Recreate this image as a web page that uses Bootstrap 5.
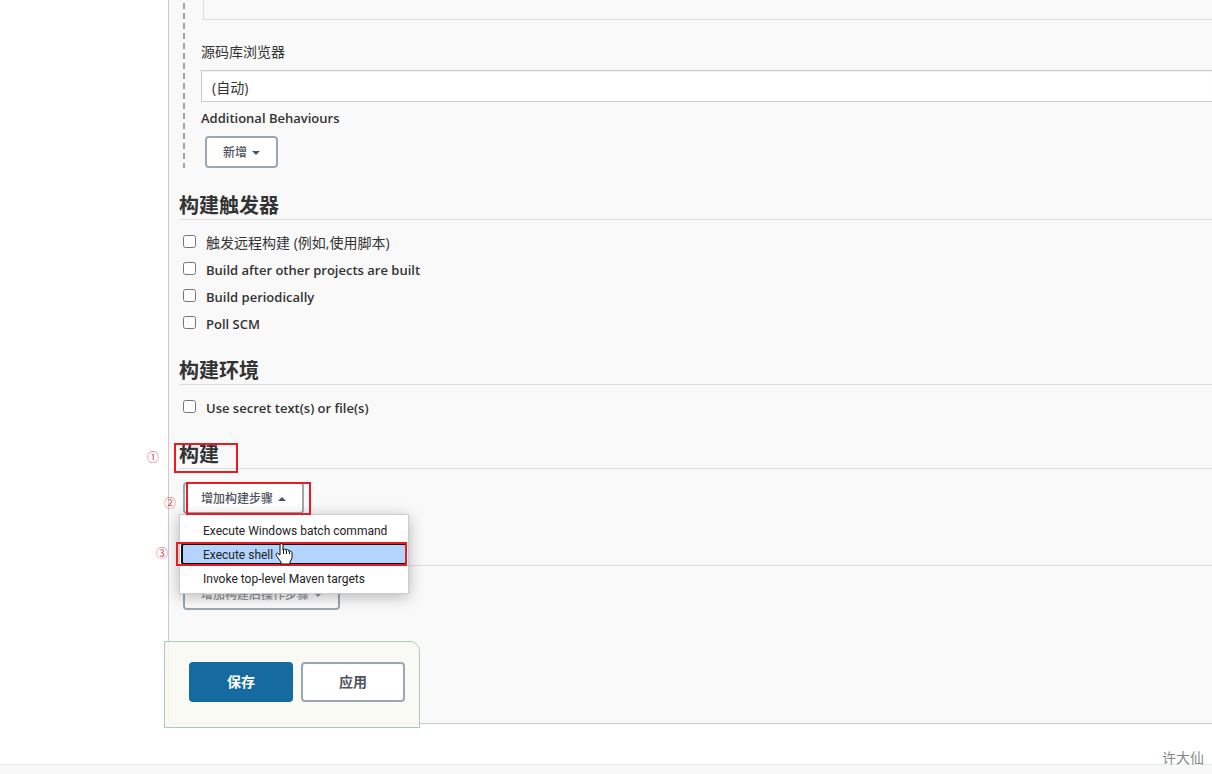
<!DOCTYPE html>
<html lang="zh-CN">
<head>
<meta charset="utf-8">
<meta name="viewport" content="width=device-width, initial-scale=1">
<title>构建配置</title>
<link href="https://cdn.jsdelivr.net/npm/bootstrap@5.3.0/dist/css/bootstrap.min.css" rel="stylesheet">
<style>
body { font-family: "Open Sans", "Noto Sans CJK SC", sans-serif; font-size: 14px; line-height: 20px; color: #333; background: #fff; }
.side-gap { flex: 0 0 168px; }
.config-panel { background: #f9f9f9; border: solid #ccc; border-width: 0 0 1px 1px; border-radius: 0 0 0 4px; padding: 0 0 113px 10px; }
.scm-block { margin: 0 0 23px 4px; padding-left: 18px; background: repeating-linear-gradient(#0000 0 3px, #a3a3a3 3px 9px, #0000 9px 10px) left top / 2px 100% no-repeat; }
.scm-frame { height: 20px; margin: 0 0 22px 2px; border: solid #ddd; border-width: 0 0 1px 1px; }
.field-label { font-size: 14px; font-weight: 400; }
.latin { font-size: 13px; font-weight: 600; }
.behaviours { padding: 6px 0 8px; }
.scm-select { height: 32px; padding: 3px 10px 0; font-size: 14px; color: #333; background: #fff; border: 1px solid #ccc; border-right: 0; border-radius: 0; box-shadow: inset 0 1px 1px #0000000d; appearance: none; }
.section-title { margin: 20px 0 0; height: 29px; font-size: 20px; line-height: 30px; font-weight: 700; border-bottom: 1px solid #ddd; color: #333; }
.scm-block + .section-title { margin-top: 0; }
.section-rule { margin-top: 23px; }
.option-list { padding: 8px 0 0 4px; }
.option-row { height: 27px; }
.option-row input { width: 13px; height: 13px; margin: 0 10px 0 0; }
.option-row label { padding-top: 3px; }
.step-holder { margin: 13px 0 0 4px; height: 32px; }
.section-rule + .step-holder { margin-top: 12px; }
.step-btn { height: 32px; padding: 2px 16px 0; font-size: 12px; font-weight: 500; color: #4d545d; background: #fff; border: 2px solid #9aa8b3; border-radius: 4px; display: flex; align-items: center; gap: 5px; }
.step-btn svg { width: 8px; height: 4px; fill: currentColor; }
.step-btn:disabled { color: #8f9499; background: #fcfcfc; }
.step-menu { display: block; top: 32px; left: -4px; width: 230px; padding: 4px 1px 2px; border: 1px solid #ccc; border-radius: 0; box-shadow: 0 3px 14px #0004; }
.step-menu .dropdown-item { height: 24px; padding: 0 22px; font-family: Roboto, sans-serif; font-size: 12px; line-height: 24px; color: #222; }
.step-menu .dropdown-item.current { height: 22px; margin-bottom: 2px; padding: 0 20px; line-height: 20px; background: #b3d4ff; border: 2px solid #111; border-radius: 3px; }
.red-frame { position: absolute; border: 2px solid #e91c24; pointer-events: none; }
.red-number { position: absolute; color: #ea4a50; font: 12px/16px "Noto Sans CJK SC", sans-serif; }
.hand { position: absolute; left: 94px; top: -1px; width: 18px; height: 24px; z-index: 2; }
.save-bar { position: absolute; left: -5px; bottom: -5px; padding: 20px 14px 25px 24px; background: #f8f9f2e0; border: 1px solid #abcbb9; border-radius: 0 10px 0 0; }
.save-bar .btn { width: 104px; height: 40px; font-size: 14px; font-weight: 700; line-height: 20px; border-radius: 4px; padding: 0; }
.save-bar .btn-save, .save-bar .btn-save:hover { color: #fff; background: #156a9f; border: 0; }
.btn-apply { color: #4d545d; background: #fff; border: 2px solid #9aa8b3; }
.page-end { margin-top: 40px; height: 10px; background: #f8f8f8; border-top: 1px solid #e4eeee; }
.watermark { position: absolute; right: 8px; bottom: 6px; color: #888; }
</style>
</head>
<body>
<div class="d-flex">
  <div class="side-gap"></div>
  <main class="config-panel flex-grow-1 position-relative">
    <section class="scm-block">
      <div class="scm-frame"></div>
      <label class="field-label d-block mb-2" for="browser">源码库浏览器</label>
      <select class="scm-select d-block w-100" id="browser"><option>(自动)</option></select>
      <div class="latin behaviours">Additional Behaviours</div>
      <button class="step-btn ms-1" type="button">新增 <svg viewBox="0 0 8 4"><path d="M0 0h8L4 4z"/></svg></button>
    </section>

    <h2 class="section-title">构建触发器</h2>
    <div class="option-list">
      <div class="option-row d-flex align-items-center"><input type="checkbox" id="remote"><label class="field-label" for="remote">触发远程构建 (例如,使用脚本)</label></div>
      <div class="option-row d-flex align-items-center"><input type="checkbox" id="after"><label class="latin" for="after">Build after other projects are built</label></div>
      <div class="option-row d-flex align-items-center"><input type="checkbox" id="periodic"><label class="latin" for="periodic">Build periodically</label></div>
      <div class="option-row d-flex align-items-center"><input type="checkbox" id="poll"><label class="latin" for="poll">Poll SCM</label></div>
    </div>

    <h2 class="section-title">构建环境</h2>
    <div class="option-list">
      <div class="option-row d-flex align-items-center"><input type="checkbox" id="secret"><label class="latin" for="secret">Use secret text(s) or file(s)</label></div>
    </div>

    <h2 class="section-title position-relative">构建
      <span class="red-frame" style="left:-5px;top:3px;width:64px;height:30px"></span>
      <span class="red-number" style="left:-32px;top:9px">①</span>
    </h2>
    <div class="dropdown step-holder">
      <button class="step-btn" type="button" aria-expanded="true">增加构建步骤 <svg viewBox="0 0 8 4"><path d="M0 4h8L4 0z"/></svg></button>
      <span class="red-frame" style="left:3px;top:0;width:125px;height:33px;z-index:1001"></span>
      <span class="red-number" style="left:-19px;top:13px">②</span>
      <ul class="dropdown-menu step-menu">
        <li><a class="dropdown-item" href="#">Execute Windows batch command</a></li>
        <li class="position-relative"><a class="dropdown-item current" href="#">Execute shell</a>
          <span class="red-frame" style="left:-5px;top:-1px;width:231px;height:24px"></span>
          <span class="red-number" style="left:-25px;top:2px">③</span>
          <svg class="hand" viewBox="0 0 18 24"><path d="M5 13V3q0-1.500 1.500-1.500T8 3V8q0-1 1.500-1T11 8.500q0-1 1.500-1T14 9.500q0-1 1.500-.500T17 10.500V16l-2 4v2H6v-2L1.500 14Q.500 12.500 1.500 11.500t2.500 1z" fill="#fff" stroke="#111"/><path d="M8.500 8v4M11.500 8.500V12M14.500 9.500V12" stroke="#111" fill="none"/></svg>
        </li>
        <li><a class="dropdown-item" href="#">Invoke top-level Maven targets</a></li>
      </ul>
    </div>

    <div class="section-title section-rule"></div>
    <div class="step-holder">
      <button class="step-btn" type="button" disabled>增加构建后操作步骤 <svg viewBox="0 0 8 4"><path d="M0 0h8L4 4z"/></svg></button>
    </div>

    <div class="save-bar d-flex gap-2">
      <button class="btn btn-save" type="submit">保存</button>
      <button class="btn btn-apply" type="button">应用</button>
    </div>
  </main>
</div>
<footer class="page-end position-relative"><span class="watermark">许大仙</span></footer>
<script src="https://cdn.jsdelivr.net/npm/bootstrap@5.3.0/dist/js/bootstrap.bundle.min.js"></script>
</body>
</html>
